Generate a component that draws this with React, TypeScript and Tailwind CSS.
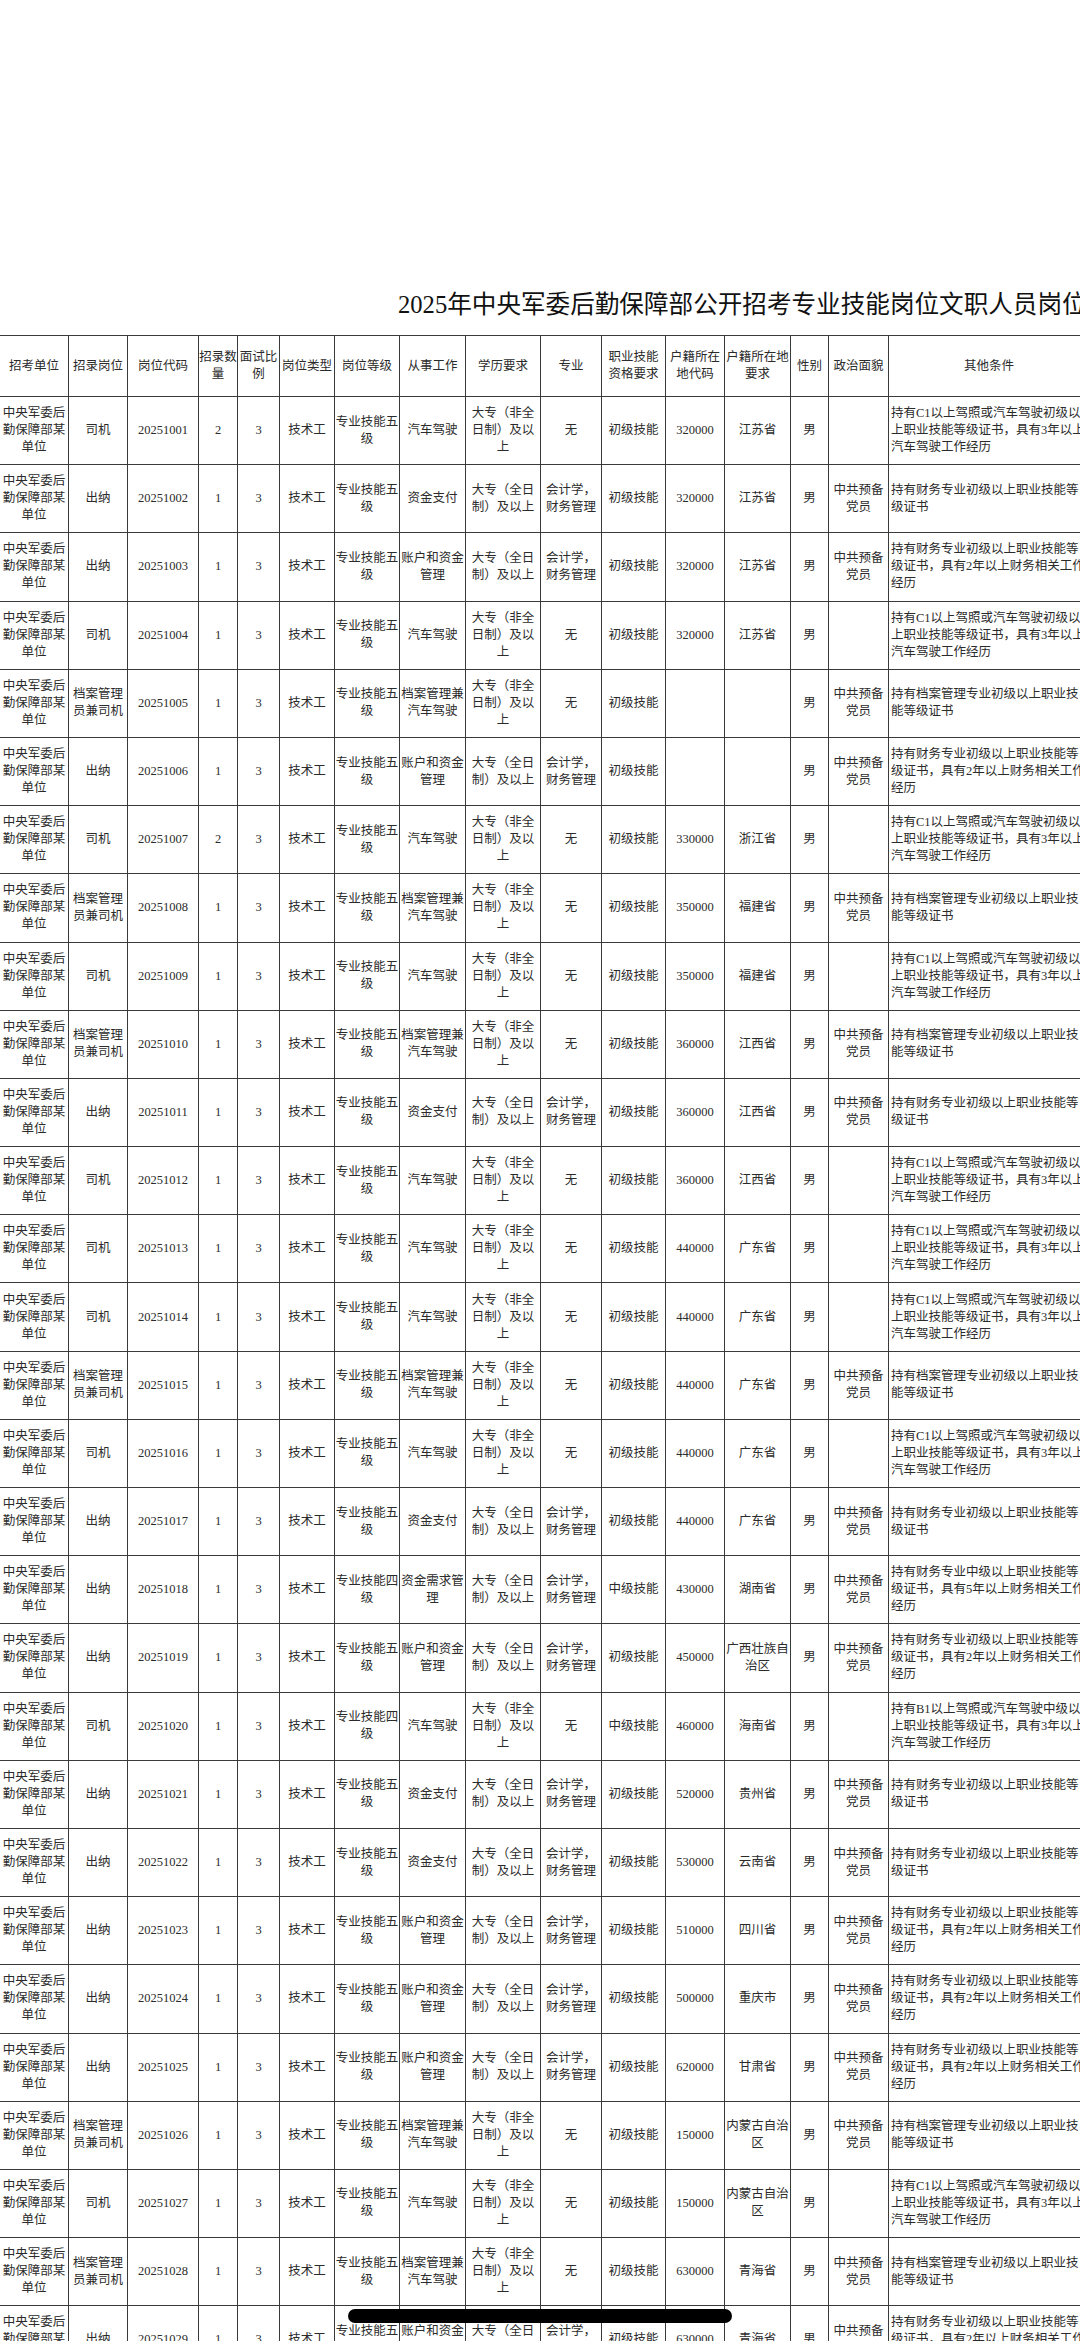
import React from "react";

const UNIT = "中央军委后勤保障部某单位";
const C1 = "持有C1以上驾照或汽车驾驶初级以上职业技能等级证书，具有3年以上汽车驾驶工作经历";
const B1 = "持有B1以上驾照或汽车驾驶中级以上职业技能等级证书，具有3年以上汽车驾驶工作经历";
const FIN = "持有财务专业初级以上职业技能等级证书";
const FIN2 = "持有财务专业初级以上职业技能等级证书，具有2年以上财务相关工作经历";
const FIN5 = "持有财务专业中级以上职业技能等级证书，具有5年以上财务相关工作经历";
const ARC = "持有档案管理专业初级以上职业技能等级证书";

const HEADERS = [
  "招考单位",
  "招录岗位",
  "岗位代码",
  "招录数量",
  "面试比例",
  "岗位类型",
  "岗位等级",
  "从事工作",
  "学历要求",
  "专业",
  "职业技能资格要求",
  "户籍所在地代码",
  "户籍所在地要求",
  "性别",
  "政治面貌",
  "其他条件",
];

// padding per column, tuned so the wraps land where the source document has them
const PAD = [
  "px-[2px]",
  "px-[2px]",
  "px-[2px]",
  "px-0",
  "px-[1px]",
  "px-[2px]",
  "px-0",
  "px-[1px]",
  "px-[2px]",
  "px-[2px]",
  "px-[2px]",
  "px-[2px]",
  "px-[1px]",
  "px-[1px]",
  "px-[2px]",
  "px-[2px]",
];

const GRID =
  "grid grid-cols-[69px_59px_71px_39px_42px_55px_65px_66px_75px_61px_64px_59px_66px_38px_60px_201px]";

type Row = string[];

const row = (
  post: string,
  code: string,
  n: string,
  grade: string,
  work: string,
  edu: string,
  major: string,
  skill: string,
  hc: string,
  hp: string,
  party: string,
  other: string
): Row => [UNIT, post, code, n, "3", "技术工", grade, work, edu, major, skill, hc, hp, "男", party, other];

const FULL = "大专（全日制）及以上";
const PART = "大专（非全日制）及以上";
const ACC = "会计学，财务管理";
const L5 = "专业技能五级";

const driver = (code: string, n: string, hc: string, hp: string) =>
  row("司机", code, n, L5, "汽车驾驶", PART, "无", "初级技能", hc, hp, "", C1);
const archive = (code: string, hc: string, hp: string) =>
  row("档案管理员兼司机", code, "1", L5, "档案管理兼汽车驾驶", PART, "无", "初级技能", hc, hp, "中共预备党员", ARC);
const pay = (code: string, hc: string, hp: string) =>
  row("出纳", code, "1", L5, "资金支付", FULL, ACC, "初级技能", hc, hp, "中共预备党员", FIN);
const acct = (code: string, hc: string, hp: string) =>
  row("出纳", code, "1", L5, "账户和资金管理", FULL, ACC, "初级技能", hc, hp, "中共预备党员", FIN2);

const ROWS: Row[] = [
  driver("20251001", "2", "320000", "江苏省"),
  pay("20251002", "320000", "江苏省"),
  acct("20251003", "320000", "江苏省"),
  driver("20251004", "1", "320000", "江苏省"),
  archive("20251005", "", ""),
  acct("20251006", "", ""),
  driver("20251007", "2", "330000", "浙江省"),
  archive("20251008", "350000", "福建省"),
  driver("20251009", "1", "350000", "福建省"),
  archive("20251010", "360000", "江西省"),
  pay("20251011", "360000", "江西省"),
  driver("20251012", "1", "360000", "江西省"),
  driver("20251013", "1", "440000", "广东省"),
  driver("20251014", "1", "440000", "广东省"),
  archive("20251015", "440000", "广东省"),
  driver("20251016", "1", "440000", "广东省"),
  pay("20251017", "440000", "广东省"),
  row("出纳", "20251018", "1", "专业技能四级", "资金需求管理", FULL, ACC, "中级技能", "430000", "湖南省", "中共预备党员", FIN5),
  acct("20251019", "450000", "广西壮族自治区"),
  row("司机", "20251020", "1", "专业技能四级", "汽车驾驶", PART, "无", "中级技能", "460000", "海南省", "", B1),
  pay("20251021", "520000", "贵州省"),
  pay("20251022", "530000", "云南省"),
  acct("20251023", "510000", "四川省"),
  acct("20251024", "500000", "重庆市"),
  acct("20251025", "620000", "甘肃省"),
  archive("20251026", "150000", "内蒙古自治区"),
  driver("20251027", "1", "150000", "内蒙古自治区"),
  archive("20251028", "630000", "青海省"),
  acct("20251029", "630000", "青海省"),
];

function Cell({ i, head, children }: { i: number; head?: boolean; children: React.ReactNode }) {
  const left = !head && i === HEADERS.length - 1;
  return (
    <div
      className={`flex items-center border-r border-b border-[#3a3a3a] ${PAD[i]} ${
        left ? "justify-start text-left" : "justify-center text-center"
      }`}
    >
      <span className="block w-full">{children}</span>
    </div>
  );
}

export default function App() {
  return (
    <div
      className="relative w-[1080px] h-[2341px] overflow-hidden bg-white text-[#2b2b2b] [text-autospace:no-autospace] [text-spacing-trim:space-all]"
      style={{ fontFamily: '"Liberation Serif", "Noto Sans CJK SC", serif' }}
    >
      <div className="pt-[290px]">
        <h1 className="pl-[398px] text-[24.6px] leading-[29px] font-normal text-[#111] whitespace-nowrap">
          2025年中央军委后勤保障部公开招考专业技能岗位文职人员岗位计划表
        </h1>
        <div className="mt-[16px] w-[1090px] text-[12.5px] leading-[17px]">
          <div className={`${GRID} h-[62px] border-t border-[#3a3a3a]`}>
            {HEADERS.map((h, i) => (
              <Cell key={h} i={i} head>
                {h}
              </Cell>
            ))}
          </div>
          {ROWS.map((r) => (
            <div key={r[2]} className={`${GRID} h-[68.2px]`}>
              {r.map((v, i) => (
                <Cell key={i} i={i}>
                  {v}
                </Cell>
              ))}
            </div>
          ))}
        </div>
      </div>
      <div className="absolute bottom-[18px] left-1/2 -translate-x-1/2 w-[384px] h-[14px] rounded-full bg-black" />
    </div>
  );
}
